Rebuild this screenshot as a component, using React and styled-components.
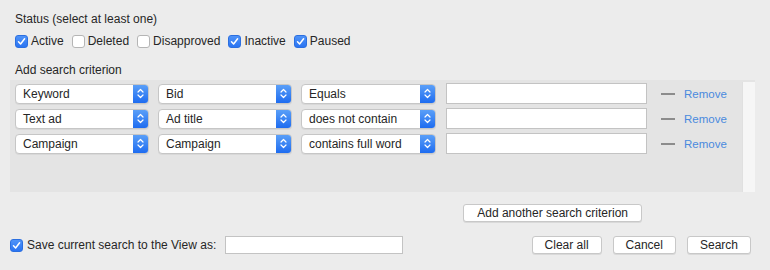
import React from 'react'
import styled, { createGlobalStyle } from 'styled-components'

const Global = createGlobalStyle`
  html, body {
    margin: 0;
    padding: 0;
    background: #ececec;
  }
  body {
    font-family: "Liberation Sans", Arial, sans-serif;
    font-size: 12px;
    color: #262626;
  }
`;

const Page = styled.div`
  width: 770px;
  height: 270px;
  box-sizing: border-box;
  padding: 12px 15px 0 10px;
  display: flex;
  flex-direction: column;
`;

const Heading = styled.div`
  padding-left: 5px;
  line-height: 15px;
  height: 15px;
  margin-top: ${p => p.mt || 0}px;
`;

const StatusRow = styled.div`
  display: flex;
  align-items: center;
  gap: 8px;
  padding-left: 5px;
  margin-top: 6px;
  height: 16px;
`;

const CheckLabel = styled.label`
  display: flex;
  align-items: center;
  gap: 3px;
`;

const Box = styled.span`
  width: 13px;
  height: 13px;
  box-sizing: border-box;
  border-radius: 3px;
  display: inline-flex;
  align-items: center;
  justify-content: center;
  background: ${p => (p.checked ? 'linear-gradient(#4f93f8, #2a74f2)' : '#fff')};
  border: 1px solid ${p => (p.checked ? '#2b6fe0' : '#b5b5b5')};
`;

const Panel = styled.div`
  margin-top: 2px;
  height: 112px;
  background: #e4e4e4;
  display: flex;
  justify-content: space-between;
`;

const Rows = styled.div`
  padding: 3px 0 0 5px;
  display: flex;
  flex-direction: column;
  gap: 4px;
`;

const Row = styled.div`
  display: flex;
  align-items: center;
  height: 21px;
`;

const SelectBox = styled.div`
  width: ${p => p.w}px;
  height: 20px;
  margin-right: ${p => p.gap}px;
  box-sizing: border-box;
  background: #fff;
  border: 1px solid #c6c6c6;
  border-radius: 4px;
  display: flex;
  align-items: center;
  overflow: hidden;
  box-shadow: 0 1px 0 rgba(0,0,0,0.05);
`;

const SelectText = styled.span`
  flex: 1;
  padding-left: 7px;
  white-space: nowrap;
`;

const Stepper = styled.span`
  width: 15px;
  height: 100%;
  background: linear-gradient(#5a9ff8, #1e6cf0);
  display: flex;
  align-items: center;
  justify-content: center;
`;

const TextInput = styled.div`
  width: 201px;
  height: 21px;
  box-sizing: border-box;
  background: #fff;
  border: 1px solid #c3c3c3;
  margin-left: 1px;
`;

const Dash = styled.span`
  width: 14px;
  height: 2px;
  background: #8c8c8c;
  margin: 0 9px 0 14px;
`;

const RemoveLink = styled.a`
  color: #4a8ade;
  font-size: 11.5px;
  cursor: pointer;
`;

const Track = styled.div`
  width: 12px;
  margin-top: 2px;
  background: #f6f6f6;
  border-left: 1px solid #e0e0e0;
`;

const AddRow = styled.div`
  display: flex;
  justify-content: flex-end;
  padding-right: 113px;
  margin-top: 12px;
`;

const Button = styled.button`
  font-family: "Liberation Sans", Arial, sans-serif;
  font-size: 12px;
  color: #262626;
  height: 18px;
  padding: 0 ${p => p.px || 10}px;
  background: #fff;
  border: 1px solid #c8c8c8;
  border-radius: 3px;
  box-shadow: 0 1px 0 rgba(0,0,0,0.08);
  line-height: 16px;
`;

const Footer = styled.div`
  display: flex;
  align-items: center;
  margin-top: 14px;
  height: 18px;
`;

const SaveLabel = styled.label`
  display: flex;
  align-items: center;
  gap: 4px;
`;

const SaveInput = styled.div`
  width: 178px;
  height: 18px;
  box-sizing: border-box;
  background: #fff;
  border: 1px solid #c3c3c3;
  margin-left: 9px;
`;

const Actions = styled.div`
  margin-left: auto;
  display: flex;
  gap: 11px;
  margin-right: 4px;
`;

const Check = () => (
  <svg width="9" height="9" viewBox="0 0 9 9">
    <path d="M1.5 4.8 L3.6 7 L7.6 1.8" fill="none" stroke="#fff" strokeWidth="1.5" strokeLinecap="round" strokeLinejoin="round" />
  </svg>
);

const Checkbox = ({ checked }) => (
  <Box checked={checked}>{checked && <Check />}</Box>
);

const Chevrons = () => (
  <svg width="7" height="11" viewBox="0 0 7 11">
    <path d="M1 4 L3.5 1.5 L6 4 M1 7 L3.5 9.5 L6 7" fill="none" stroke="#fff" strokeWidth="1.2" strokeLinecap="round" strokeLinejoin="round" />
  </svg>
);

const Select = ({ value, w, gap }) => (
  <SelectBox w={w} gap={gap}>
    <SelectText>{value}</SelectText>
    <Stepper><Chevrons /></Stepper>
  </SelectBox>
);

const statuses = [
  ['Active', true],
  ['Deleted', false],
  ['Disapproved', false],
  ['Inactive', true],
  ['Paused', true],
];

const criteria = [
  ['Keyword', 'Bid', 'Equals'],
  ['Text ad', 'Ad title', 'does not contain'],
  ['Campaign', 'Campaign', 'contains full word'],
];

export default function App() {
  return (
    <>
      <Global />
      <Page>
        <Heading>Status (select at least one)</Heading>
        <StatusRow>
          {statuses.map(([name, on]) => (
            <CheckLabel key={name}>
              <Checkbox checked={on} />
              {name}
            </CheckLabel>
          ))}
        </StatusRow>
        <Heading mt={14}>Add search criterion</Heading>
        <Panel>
          <Rows>
            {criteria.map(([a, b, c]) => (
              <Row key={a + c}>
                <Select value={a} w={134} gap={9} />
                <Select value={b} w={134} gap={9} />
                <Select value={c} w={135} gap={9} />
                <TextInput />
                <Dash />
                <RemoveLink>Remove</RemoveLink>
              </Row>
            ))}
          </Rows>
          <Track />
        </Panel>
        <AddRow>
          <Button px={13}>Add another search criterion</Button>
        </AddRow>
        <Footer>
          <SaveLabel>
            <Checkbox checked />
            Save current search to the View as:
          </SaveLabel>
          <SaveInput />
          <Actions>
            <Button px={12}>Clear all</Button>
            <Button px={12}>Cancel</Button>
            <Button px={12}>Search</Button>
          </Actions>
        </Footer>
      </Page>
    </>
  );
}
